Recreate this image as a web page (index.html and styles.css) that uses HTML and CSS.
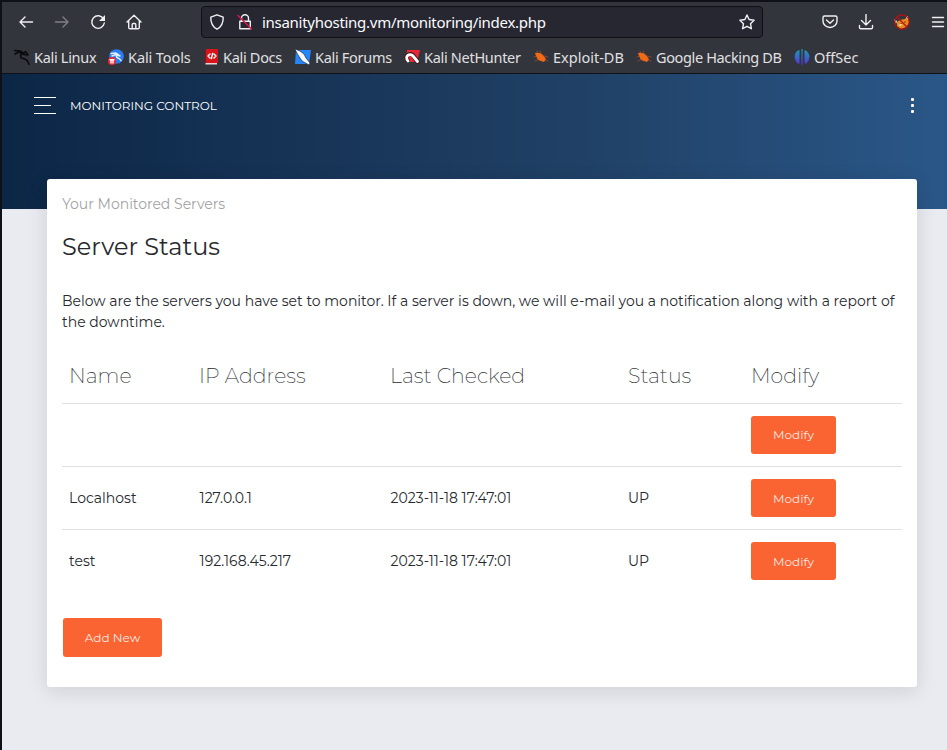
FILE: index.html
```html
<!DOCTYPE html>
<html lang="en">
<head>
<meta charset="utf-8">
<title>Monitoring Control</title>
<link rel="stylesheet" href="styles.css">
</head>
<body>
<div class="window">
  <header class="browser">
    <div class="toolbar">
      <div class="nav">
        <svg width="16" height="16" viewBox="0 0 16 16"><path d="M14.500 8H2M7 3 2 8l5 5"/></svg>
        <svg class="dim" width="16" height="16" viewBox="0 0 16 16"><path d="M1.500 8H14M9 3l5 5-5 5"/></svg>
        <svg width="16" height="16" viewBox="0 0 16 16"><path d="M13.600 5A6.300 6.300 0 1 0 14.300 9"/><path class="solid" d="M15 1v6H9z"/></svg>
        <svg width="16" height="16" viewBox="0 0 16 16"><path d="M1 8l7-6.800L15 8M2.700 6.800v6.700q0 1.300 1.300 1.300h8q1.300 0 1.300-1.300V6.800M6.200 14.500v-4q0-1 1-1h1.600q1 0 1 1v4"/></svg>
      </div>
      <div class="address">
        <svg width="16" height="16" viewBox="0 0 16 16"><path d="M8 .8 14.200 3.200C14.400 9 12 13 8 15.200 4 13 1.600 9 1.800 3.200Z"/></svg>
        <svg class="lock" width="16" height="16" viewBox="0 0 16 16"><path d="M4.500 7V4.200a3.500 3.500 0 0 1 7 0V7M2.800 7.200h10.500v7.500H2.800z"/><path class="strike" d="M1 1.500 14.500 15"/></svg>
        <span class="url">insanityhosting.vm/monitoring/index.php</span>
        <svg width="16" height="16" viewBox="0 0 16 16"><path d="m8 1 2.100 4.500 5 .7-3.600 3.500.9 5L8 12.300l-4.400 2.400.9-5L.9 6.200l5-.7z"/></svg>
      </div>
      <div class="tools">
        <svg width="16" height="16" viewBox="0 0 16 16"><path d="M2.500 2h11q1.500 0 1.500 1.500V7a7 6.500 0 0 1-14 0V3.500Q1 2 2.500 2ZM4.500 6 8 9.300 11.500 6"/></svg>
        <svg width="16" height="16" viewBox="0 0 16 16"><path d="M8 .5V11M3.500 6.500 8 11l4.500-4.500M1.500 11.500v2q0 1.300 1.300 1.300h10.400q1.300 0 1.300-1.300v-2"/></svg>
        <svg class="plain" width="16" height="16" viewBox="0 0 16 16"><path fill="#e98a1c" d="M3 8 6 6l5-1 2-2 2 1v5l-3 4-5 2-4-3z"/><path fill="#f8ead2" d="m0 5 3 2-1 3zM12 3l2-1v4zM4 11l4-1-1 2z"/><path fill="#5c2712" d="m6 10 2-1v1zM10 8l2-1-1 2z"/><circle cx="8" cy="8" r="7.200" fill="none" stroke="#b80f12" stroke-width="1.200"/><path d="m3 3 10 10" stroke="#b80f12" stroke-width="1.200"/></svg>
        <svg width="16" height="16" viewBox="0 0 16 16"><path d="M2.500 3.500h11M2.500 8h11M2.500 12.500h11"/></svg>
      </div>
    </div>
    <nav class="bookmarks">
      <a><svg width="16" height="16" viewBox="0 0 16 16"><path fill="none" stroke="#08090c" stroke-width="1.500" d="M0 1.500 6 2l4 2.500M1 5l4-2 5 2.500 4 .5M10 4.500C5 5 6 9 9 9.500s5 2 6 6M10 4l1.500-1.500L14 6"/></svg>Kali Linux</a>
      <a class="loose"><svg width="16" height="16" viewBox="0 0 16 16"><circle cx="8.500" cy="7.500" r="7.300" fill="#297df5"/><path fill="none" stroke="#e3efff" d="m3 4.500 5-.5 3 2M4 7l4-1.500 4 1.500M10 6C7 7.500 9 9 11 9.500l2 2"/><circle cx="4" cy="12" r="4" fill="#ed2431"/><path stroke="#fff" d="M2 10.800h4M3 11v3M5 11v3"/></svg>Kali Tools</a>
      <a><svg class="book" width="14" height="16" viewBox="0 0 14 16"><path fill="#d7141a" d="M1 0h12v14H1z"/><path fill="#8d1014" d="M0 1h1v13H0z"/><path fill="#e6d5d5" d="M.5 14H12v1.500H.5z"/><path fill="none" stroke="#fff" d="M5 5 3 7l2 2M9 5l2 2-2 2M7.600 4.500 6.500 9.500"/></svg>Kali Docs</a>
      <a><svg width="16" height="16" viewBox="0 0 16 16"><path fill="#2585fb" d="M1 1h15l-2 14H0z"/><path fill="#f6f8ff" stroke="#192c43" stroke-width=".7" d="m0 0 5 2 4 3 2 4 4 5-1 2-7-4-4-6z"/></svg>Kali Forums</a>
      <a><svg width="16" height="16" viewBox="0 0 16 16"><path fill="#e92733" d="M3 1h13l-3 12H2z"/><path fill="none" stroke="#4a1820" stroke-width="4.500" d="M3.500 11C0 6 7 3 9.500 7l4 6"/><path fill="none" stroke="#fff" stroke-width="2.800" d="M4 12C0 7 6 3.500 9 7l4.500 5.500"/></svg>Kali NetHunter</a>
      <a class="wide"><svg width="16" height="16" viewBox="0 0 16 16"><path fill="#f26a16" d="M2 4q5-1 8 2l3 4-2 3-6-2-2-4z"/><path fill="none" stroke="#b75525" stroke-width=".6" d="M5 4 4 2M8 4 7 2M11 7l4 1M1 8l3-1M2 12l4-2M12 11l3 1"/></svg>Exploit-DB</a>
      <a class="tight"><svg width="16" height="16" viewBox="0 0 16 16"><path fill="#f26a16" d="M2 4q5-1 8 2l3 4-2 3-6-2-2-4z"/><path fill="none" stroke="#b75525" stroke-width=".6" d="M5 4 4 2M8 4 7 2M11 7l4 1M1 8l3-1M2 12l4-2M12 11l3 1"/></svg>Google Hacking DB</a>
      <a class="wide"><svg width="16" height="16" viewBox="0 0 16 16"><defs><linearGradient id="os" gradientUnits="userSpaceOnUse" x1="0" x2="0" y1="0" y2="16"><stop stop-color="#16a2ba"/><stop offset="1" stop-color="#5630d8"/></linearGradient></defs><path fill="url(#os)" d="M5.500 1v13L4 15Q1 12 .5 8 1 2 5.500 1ZM7.400 0h1.200v16H7.400zM10.500 1q4.500 1.500 5 7-.5 4-3.500 7l-1.500-1z"/></svg>OffSec</a>
    </nav>
  </header>
  <main class="page">
    <div class="banner">
      <div class="burger"><i></i><i></i><i></i></div>
      <h1>MONITORING CONTROL</h1>
      <div class="dots"><i></i><i></i><i></i></div>
    </div>
    <section class="card">
      <p class="eyebrow">Your Monitored Servers</p>
      <h2>Server Status</h2>
      <p class="intro">Below are the servers you have set to monitor. If a server is down, we will e-mail you a notification along with a report of<br>the downtime.</p>
      <table>
        <colgroup><col class="c1"><col class="c2"><col class="c3"><col class="c4"><col class="c5"></colgroup>
        <thead><tr><th>Name</th><th>IP Address</th><th>Last Checked</th><th>Status</th><th>Modify</th></tr></thead>
        <tbody>
          <tr><td></td><td></td><td></td><td></td><td><a class="btn">Modify</a></td></tr>
          <tr><td>Localhost</td><td class="num">127.0.0.1</td><td class="num">2023-11-18 17:47:01</td><td>UP</td><td><a class="btn low">Modify</a></td></tr>
          <tr><td>test</td><td class="num">192.168.45.217</td><td class="num">2023-11-18 17:47:01</td><td>UP</td><td><a class="btn low">Modify</a></td></tr>
        </tbody>
      </table>
      <a class="btn add">Add New</a>
    </section>
  </main>
</div>
</body>
</html>
```
FILE: styles.css
```css
* { box-sizing: border-box; }
body { margin: 0; background: #0f1118; font-family: Montserrat, Inter, "Liberation Sans", sans-serif; overflow: hidden; }
h1, h2, p { margin: 0; font-weight: 400; }
.window { height: 750px; padding: 2px 0 0 2px; display: flex; flex-direction: column; }

.browser { height: 72px; flex: none; background: #33353c; border-bottom: 1px solid #101116; font: 15px/20px "Noto Sans", sans-serif; color: #e0e0e2; }
.toolbar { height: 40px; display: flex; align-items: center; }
.browser svg { flex: none; fill: none; stroke: #f0f0f2; stroke-width: 1.4; stroke-linecap: round; stroke-linejoin: round; }
.browser .solid { fill: #f0f0f2; stroke: none; }
.browser .dim { opacity: .4; }
.browser .strike { stroke: #e5134b; }
.browser .plain, .bookmarks svg { stroke: none; }
.nav { width: 199px; padding-left: 16px; display: flex; gap: 20px; }
.address { width: 562px; height: 32px; padding: 0 7px; display: flex; align-items: center; background: #262731; border: 1px solid #0f1016; border-radius: 4px; }
.lock { margin-left: 12px; }
.url { flex: 1; margin-left: 9px; color: #fbfbfe; letter-spacing: -.28px; }
.tools { display: flex; gap: 20px; margin-left: 59px; }
.bookmarks { display: grid; grid-template-columns: 94px 97px 90px 109px 129px 103px 158px 80px; padding-left: 12px; height: 29px; align-items: center; font-size: 14.5px; letter-spacing: -.3px; }
.bookmarks a { display: flex; align-items: center; gap: 4px; white-space: nowrap; }
.bookmarks .loose { letter-spacing: -.1px; }
.bookmarks .wide { letter-spacing: 0; }
.bookmarks .tight { letter-spacing: -.36px; }

.page { flex: 1; background: #e9ebf0; }
.banner { height: 135px; padding: 22px 33px 0 32px; display: flex; align-items: flex-start; background: linear-gradient(90deg, #0c2646, #204065 60%, #2a5788); color: #fff; }
.burger { width: 22px; height: 17px; display: flex; flex-direction: column; justify-content: space-between; margin-top: 1px; }
.burger i { height: 1px; background: #fff; }
.burger i:nth-child(2) { width: 17px; }
.banner h1 { margin-left: 14px; font-size: 12px; line-height: 20px; flex: 1; }
.dots { display: flex; flex-direction: column; gap: 3px; width: 3px; margin-top: 2px; }
.dots i { height: 3px; background: #fff; border-radius: 1px; }

.card { width: 870px; height: 508px; margin: -30px 0 0 45px; padding: 15px; background: #fff; border-radius: 3px; box-shadow: 0 4px 20px rgba(15, 20, 35, .12); color: #27292e; display: flow-root; position: relative; }
.eyebrow { color: #a2a2a5; font-size: 14px; line-height: 21px; }
h2 { margin-top: 17px; font-size: 24px; line-height: 30px; }
.intro { margin-top: 29px; font-size: 14px; line-height: 21px; white-space: nowrap; }
table { margin-top: 15px; width: 840px; table-layout: fixed; border-collapse: collapse; font-size: 14px; }
.c1 { width: 130px; } .c2 { width: 191px; } .c3 { width: 238px; } .c4 { width: 123px; } .c5 { width: 158px; }
th, td { padding: 0 7px; text-align: left; vertical-align: middle; white-space: nowrap; }
th { height: 55px; font-size: 20.5px; font-weight: 200; color: #27292e; }
td { height: 63px; border-top: 1px solid #dee1e5; }
td.num { padding-left: 7.6px; }
.btn { display: flex; align-items: center; justify-content: center; width: 85px; height: 38px; background: #fa6332; border-radius: 3px; color: #ffe9e1; font-size: 12px; }
.low { padding-top: 1px; }
.add { width: 99px; height: 39px; margin: 26px 0 0 1px; }
```
